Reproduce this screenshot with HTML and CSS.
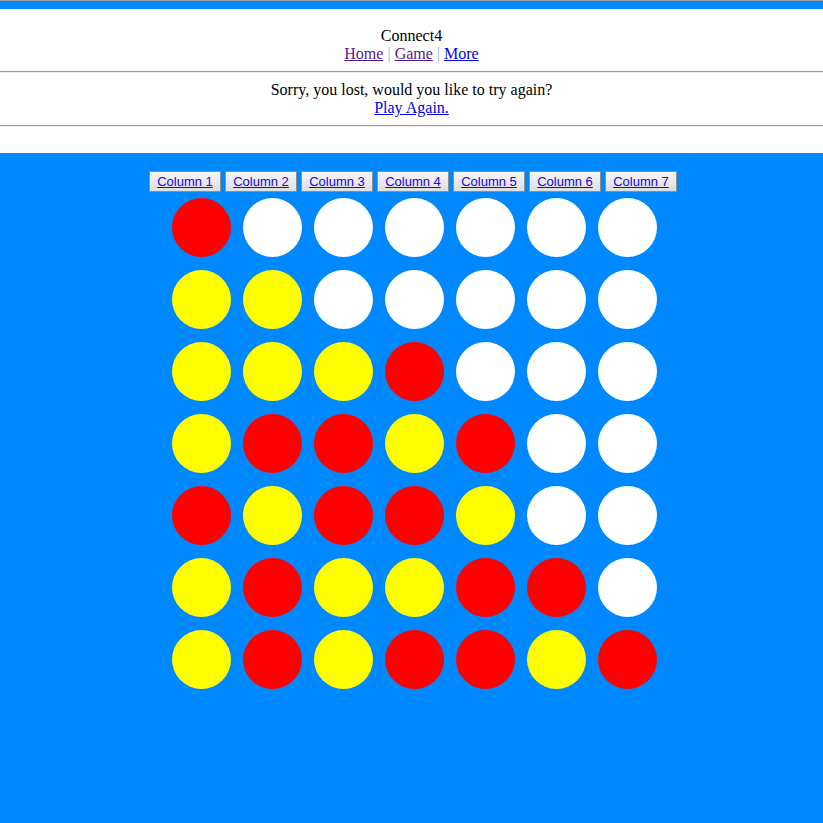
FILE: index.html
```html
<!DOCTYPE html>
<html>
<head>
<meta charset="utf-8">
<title>Connect4</title>
<link rel="stylesheet" href="styles.css">
</head>
<body>
<div class="topline"></div>
<div class="topbar"></div>
<div class="header">
  <div class="title">Connect4</div>
  <div class="nav"><a class="visited" href="#">Home</a> <span class="sep">|</span> <a class="visited" href="#">Game</a> <span class="sep">|</span> <a href="#">More</a></div>
  <hr class="rule">
  <div class="message">Sorry, you lost, would you like to try again?</div>
  <div class="again"><a href="#">Play Again.</a></div>
  <hr class="rule">
</div>
<div class="board-area">
  <div class="buttons">
    <button class="colbtn"><a href="#">Column 1</a></button>
    <button class="colbtn"><a href="#">Column 2</a></button>
    <button class="colbtn"><a href="#">Column 3</a></button>
    <button class="colbtn"><a href="#">Column 4</a></button>
    <button class="colbtn"><a href="#">Column 5</a></button>
    <button class="colbtn"><a href="#">Column 6</a></button>
    <button class="colbtn"><a href="#">Column 7</a></button>
  </div>
  <div class="grid">
    <div class="cell r"></div><div class="cell w"></div><div class="cell w"></div><div class="cell w"></div><div class="cell w"></div><div class="cell w"></div><div class="cell w"></div>
    <div class="cell y"></div><div class="cell y"></div><div class="cell w"></div><div class="cell w"></div><div class="cell w"></div><div class="cell w"></div><div class="cell w"></div>
    <div class="cell y"></div><div class="cell y"></div><div class="cell y"></div><div class="cell r"></div><div class="cell w"></div><div class="cell w"></div><div class="cell w"></div>
    <div class="cell y"></div><div class="cell r"></div><div class="cell r"></div><div class="cell y"></div><div class="cell r"></div><div class="cell w"></div><div class="cell w"></div>
    <div class="cell r"></div><div class="cell y"></div><div class="cell r"></div><div class="cell r"></div><div class="cell y"></div><div class="cell w"></div><div class="cell w"></div>
    <div class="cell y"></div><div class="cell r"></div><div class="cell y"></div><div class="cell y"></div><div class="cell r"></div><div class="cell r"></div><div class="cell w"></div>
    <div class="cell y"></div><div class="cell r"></div><div class="cell y"></div><div class="cell r"></div><div class="cell r"></div><div class="cell y"></div><div class="cell r"></div>
  </div>
</div>
</body>
</html>
```
FILE: styles.css
```css
html, body {
  margin: 0;
  padding: 0;
  height: 100%;
}
body {
  background: #0088ff;
  font-family: "Liberation Serif", "Times New Roman", serif;
  font-size: 16px;
  line-height: 18px;
  display: flex;
  flex-direction: column;
}
.topline {
  height: 1px;
  background: #a0a0a0;
}
.topbar {
  height: 8px;
  background: #0088ff;
}
.header {
  background: #ffffff;
  text-align: center;
  padding-top: 18px;
  padding-bottom: 26px;
  color: #000;
}
.nav a.visited {
  color: #551a8b;
}
.nav a, .again a {
  color: #0000ee;
}
.nav a.visited {
  color: #551a8b;
}
.sep {
  color: #9fb6d0;
}
.rule {
  margin: 8px 0;
  height: 0;
  border: 0;
  border-top: 1px solid #9a9a9a;
  border-bottom: 1px solid #eeeeee;
}
.header .rule:last-child {
  margin-bottom: 0;
}
.board-area {
  flex: 1;
  background: #0088ff;
  padding-top: 18px;
}
.buttons {
  display: flex;
  justify-content: center;
  gap: 4px;
  padding-left: 3px;
}
.colbtn {
  width: 72px;
  height: 21px;
  padding: 0;
  margin: 0;
  border: 1px solid #8f8f8f;
  background: linear-gradient(#f7f7f7, #dedede);
  font-family: "Liberation Sans", Arial, sans-serif;
  font-size: 13px;
  line-height: 15px;
  cursor: pointer;
}
.colbtn a {
  color: #2200ee;
  text-decoration: underline;
}
.grid {
  display: grid;
  grid-template-columns: repeat(7, 59px);
  grid-auto-rows: 59px;
  column-gap: 12px;
  row-gap: 13px;
  justify-content: center;
  padding-left: 6px;
  margin-top: 6px;
}
.cell {
  border-radius: 50%;
}
.cell.r { background: #ff0000; }
.cell.y { background: #ffff00; }
.cell.w { background: #ffffff; }
```
